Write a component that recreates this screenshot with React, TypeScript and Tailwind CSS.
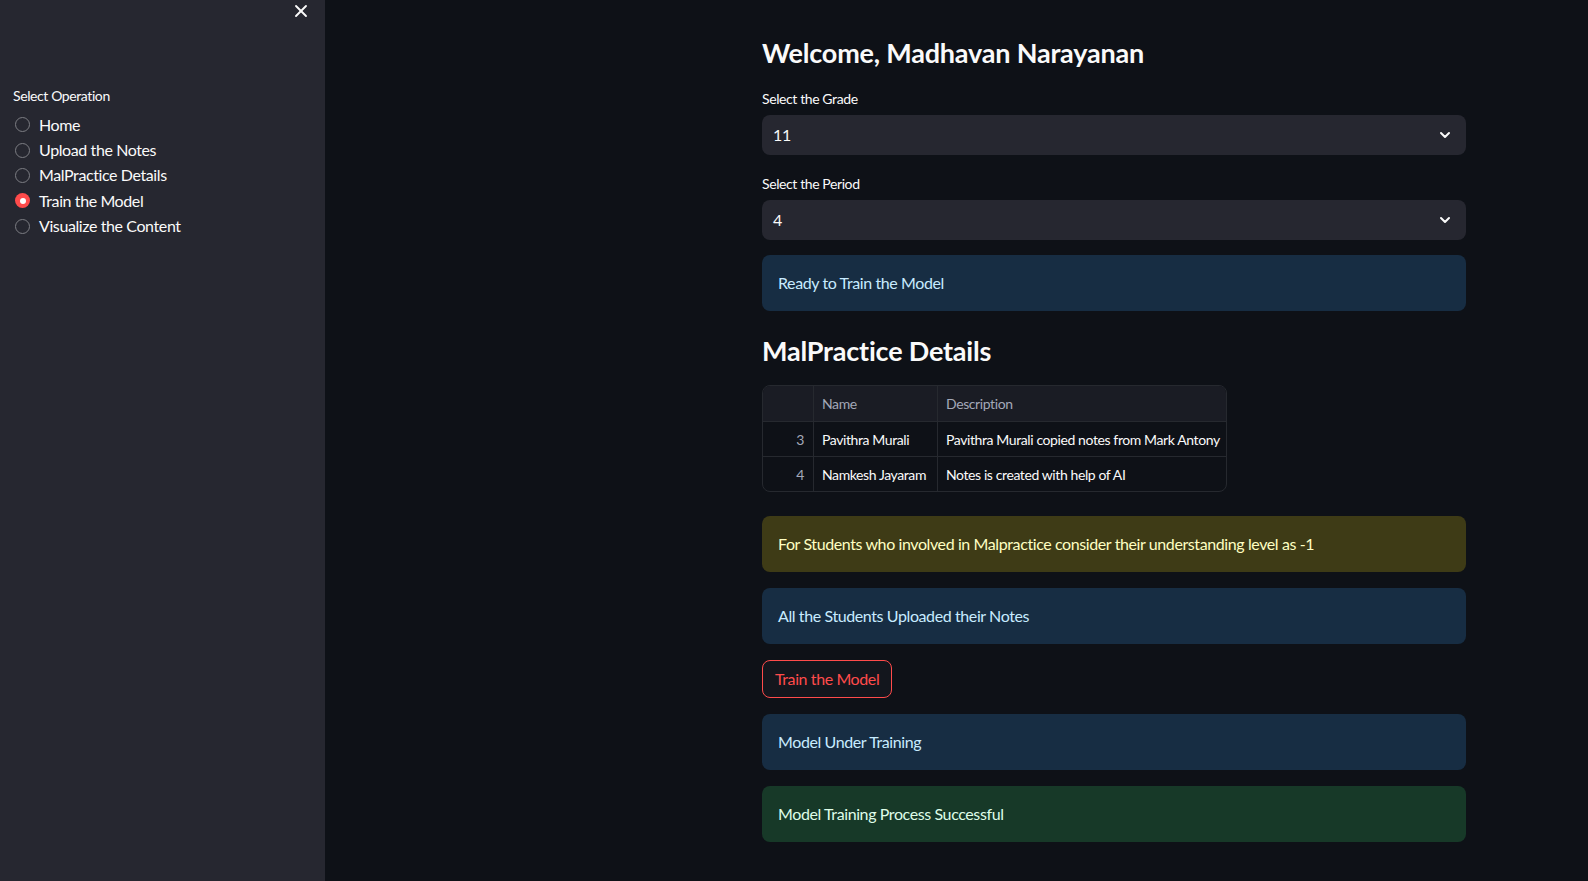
import React from "react";
import { X, ChevronDown } from "lucide-react";

const font = { fontFamily: "Lato, 'Noto Sans', sans-serif" };

function Radio({ label, checked }: { label: string; checked?: boolean }) {
  return (
    <div className="flex h-[25.4px] items-center">
      <div
        className={
          checked
            ? "ml-[2px] flex h-[15px] w-[15px] items-center justify-center rounded-full bg-[#ff4b4b]"
            : "ml-[2px] h-[15px] w-[15px] rounded-full border border-[#7c7d83]"
        }
      >
        {checked && <div className="h-[6px] w-[6px] rounded-full bg-white" />}
      </div>
      <span className="ml-[9px] text-[16px] text-[#fafafa]">{label}</span>
    </div>
  );
}

function SelectBox({ label, value }: { label: string; value: string }) {
  return (
    <div>
      <div className="flex h-[20px] items-center text-[14px] text-[#fafafa]">{label}</div>
      <div className="mt-[7px] flex h-[40px] items-center justify-between rounded-[8px] bg-[#262730] pl-[11px] pr-[13px]">
        <span className="text-[16px] text-[#fafafa]">{value}</span>
        <ChevronDown size={16} strokeWidth={3} className="text-[#fafafa]" />
      </div>
    </div>
  );
}

function Alert({ text, kind, className }: { text: string; kind: "info" | "warn" | "success"; className?: string }) {
  const cls =
    kind === "info"
      ? "bg-[#172d43] text-[#c7ebff]"
      : kind === "warn"
      ? "bg-[#3e3b16] text-[#ffffc2]"
      : "bg-[#173928] text-[#dffde9]";
  return (
    <div className={`flex h-[56px] items-center rounded-[8px] px-[16px] text-[16px] ${cls} ${className ?? ""}`}>
      {text}
    </div>
  );
}

export default function App() {
  const rows = [
    { i: 3, name: "Pavithra Murali", desc: "Pavithra Murali copied notes from Mark Antony" },
    { i: 4, name: "Namkesh Jayaram", desc: "Notes is created with help of AI" },
  ];
  return (
    <div className="flex h-[881px] w-full overflow-hidden bg-[#0e1117] tracking-[-0.4px]" style={font}>
      <aside className="flex w-[325px] shrink-0 flex-col bg-[#262730]">
        <div className="flex h-[21px] items-end justify-end pr-[14px]">
          <X size={20} strokeWidth={2.25} className="text-[#fafafa]" />
        </div>
        <div className="mt-[64px] pl-[13px]">
          <div className="flex h-[20px] items-center text-[14px] text-[#fafafa]">Select Operation</div>
          <div className="mt-[7px] flex flex-col">
            <Radio label="Home" />
            <Radio label="Upload the Notes" />
            <Radio label="MalPractice Details" />
            <Radio label="Train the Model" checked />
            <Radio label="Visualize the Content" />
          </div>
        </div>
      </aside>
      <main className="flex-1 pl-[437px] pt-[33px]">
        <div className="flex w-[704px] flex-col">
          <h2 className="flex h-[40px] items-center text-[27px] font-bold tracking-[-0.2px] text-[#fafafa]">
            Welcome, Madhavan Narayanan
          </h2>
          <div className="mt-[15px]">
            <SelectBox label="Select the Grade" value="11" />
          </div>
          <div className="mt-[18px]">
            <SelectBox label="Select the Period" value="4" />
          </div>
          <Alert className="mt-[15px]" kind="info" text="Ready to Train the Model" />
          <h2 className="mt-[20px] flex h-[40px] items-center text-[27px] font-bold tracking-[-0.2px] text-[#fafafa]">
            MalPractice Details
          </h2>
          <div className="mt-[14px] w-[465px] overflow-hidden rounded-[8px] border border-[#26292f] text-[14px]">
            <div className="flex h-[35px] items-center bg-[#1a1c24] text-[#a3a8b8]">
              <div className="h-full w-[51px] shrink-0 border-r border-[#26292f]" />
              <div className="flex h-full w-[124px] shrink-0 items-center border-r border-[#26292f] pl-[8px]">Name</div>
              <div className="flex h-full flex-1 items-center pl-[8px]">Description</div>
            </div>
            {rows.map((r) => (
              <div key={r.i} className="flex h-[35px] items-center border-t border-[#26292f] text-[#fafafa]">
                <div className="flex h-full w-[51px] shrink-0 items-center justify-end border-r border-[#26292f] pr-[9px] text-[#a3a8b8]">
                  {r.i}
                </div>
                <div className="flex h-full w-[124px] shrink-0 items-center whitespace-nowrap border-r border-[#26292f] pl-[8px]">
                  {r.name}
                </div>
                <div className="flex h-full min-w-0 flex-1 items-center overflow-hidden whitespace-nowrap pl-[8px]">
                  {r.desc}
                </div>
              </div>
            ))}
          </div>
          <Alert
            className="mt-[24px]"
            kind="warn"
            text="For Students who involved in Malpractice consider their understanding level as -1"
          />
          <Alert className="mt-[16px]" kind="info" text="All the Students Uploaded their Notes" />
          <div className="mt-[16px]">
            <button className="flex h-[38px] items-center rounded-[8px] border border-[#ff4b4b] bg-[#13161d] px-[12px] text-[16px] text-[#ff4b4b]">
              Train the Model
            </button>
          </div>
          <Alert className="mt-[16px]" kind="info" text="Model Under Training" />
          <Alert className="mt-[16px]" kind="success" text="Model Training Process Successful" />
        </div>
      </main>
    </div>
  );
}
